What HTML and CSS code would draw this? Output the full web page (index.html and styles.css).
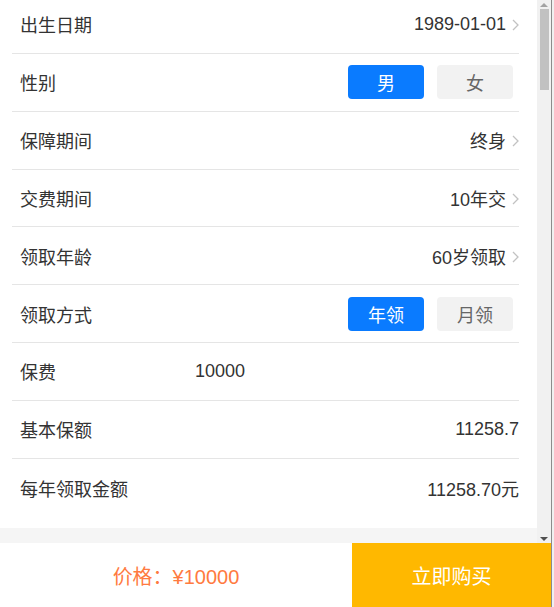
FILE: index.html
```html
<!DOCTYPE html>
<html lang="zh">
<head>
<meta charset="utf-8">
<title>保险计算</title>
<link rel="stylesheet" href="styles.css">
</head>
<body>
<div class="app">
  <div class="main">
    <div class="content">
      <div class="list">
        <div class="row">
          <span class="label">出生日期</span>
          <span class="value">1989-01-01<svg class="chev" width="7" height="12" viewBox="0 0 7 12"><polyline points="1,1 6,6 1,11" fill="none" stroke="#c2c2c2" stroke-width="1.3"/></svg></span>
        </div>
        <div class="row">
          <span class="label">性别</span>
          <span class="seg"><span class="opt on">男</span><span class="opt">女</span></span>
        </div>
        <div class="row">
          <span class="label">保障期间</span>
          <span class="value">终身<svg class="chev" width="7" height="12" viewBox="0 0 7 12"><polyline points="1,1 6,6 1,11" fill="none" stroke="#c2c2c2" stroke-width="1.3"/></svg></span>
        </div>
        <div class="row">
          <span class="label">交费期间</span>
          <span class="value">10年交<svg class="chev" width="7" height="12" viewBox="0 0 7 12"><polyline points="1,1 6,6 1,11" fill="none" stroke="#c2c2c2" stroke-width="1.3"/></svg></span>
        </div>
        <div class="row">
          <span class="label">领取年龄</span>
          <span class="value">60岁领取<svg class="chev" width="7" height="12" viewBox="0 0 7 12"><polyline points="1,1 6,6 1,11" fill="none" stroke="#c2c2c2" stroke-width="1.3"/></svg></span>
        </div>
        <div class="row">
          <span class="label">领取方式</span>
          <span class="seg"><span class="opt on">年领</span><span class="opt">月领</span></span>
        </div>
        <div class="row">
          <span class="label fixed">保费</span>
          <span class="input">10000</span>
        </div>
        <div class="row">
          <span class="label">基本保额</span>
          <span class="value">11258.7</span>
        </div>
        <div class="row last">
          <span class="label">每年领取金额</span>
          <span class="value">11258.70元</span>
        </div>
      </div>
    </div>
    <div class="scrollbar">
      <div class="arrow up"></div>
      <div class="track"><div class="thumb"></div></div>
      <div class="arrow down"></div>
    </div>
  </div>
  <div class="footer">
    <div class="price">价格：¥10000</div>
    <div class="buy">立即购买</div>
  </div>
</div>
</body>
</html>
```
FILE: styles.css
```css
html, body {
  margin: 0;
  padding: 0;
  background: #f0f0f0;
}
body {
  width: 554px;
  height: 607px;
  overflow: hidden;
  font-family: "Liberation Sans", "Noto Sans CJK SC", sans-serif;
  color: #333;
}
.app {
  width: 551px;
  height: 607px;
  display: flex;
  flex-direction: column;
  border-right: 1px solid #8c8c8c;
  background: #fff;
}
.main {
  height: 543px;
  display: flex;
  flex-direction: row;
}
.content {
  flex: 1;
  overflow: hidden;
  background: #f5f5f5;
}
.list {
  background: #fff;
  margin-top: -4px;
  padding: 0 18px 11px 12px;
}
.row {
  height: 56.85px;
  border-bottom: 1px solid #e5e5e5;
  display: flex;
  align-items: center;
  justify-content: space-between;
  padding-left: 8px;
  font-size: 18px;
}
.row.last {
  border-bottom: none;
  height: 57.85px;
}
.label {
  color: #333;
}
.label.fixed {
  width: 175px;
  flex: none;
}
.input {
  flex: 1;
  color: #333;
}
.value {
  display: flex;
  align-items: center;
  color: #333;
}
.chev {
  margin-left: 6px;
  margin-top: 2px;
}
.seg {
  display: flex;
  gap: 13px;
  margin-right: 6px;
}
.opt {
  width: 76px;
  height: 34px;
  border-radius: 4px;
  background: #f2f2f2;
  color: #666;
  display: flex;
  align-items: center;
  justify-content: center;
  font-size: 18px;
}
.opt.on {
  background: #0a7bff;
  color: #fff;
}
.scrollbar {
  width: 14px;
  background: #f1f1f1;
  display: flex;
  flex-direction: column;
}
.arrow {
  height: 9px;
  display: flex;
  align-items: center;
  justify-content: center;
}
.arrow.up::before {
  content: "";
  border-left: 4px solid transparent;
  border-right: 4px solid transparent;
  border-bottom: 4px solid #a3a3a3;
}
.arrow.down::before {
  content: "";
  border-left: 4px solid transparent;
  border-right: 4px solid transparent;
  border-top: 4px solid #505050;
}
.track {
  flex: 1;
  padding: 0 2px 0 3px;
}
.thumb {
  height: 81px;
  background: #c1c1c1;
}
.footer {
  height: 64px;
  display: flex;
  flex-direction: row;
}
.price {
  flex: 1;
  display: flex;
  align-items: center;
  justify-content: center;
  color: #ff7a40;
  font-size: 20px;
  background: #fff;
}
.buy {
  width: 199px;
  background: #ffb800;
  color: #fff;
  font-size: 20px;
  display: flex;
  align-items: center;
  justify-content: center;
}
```
